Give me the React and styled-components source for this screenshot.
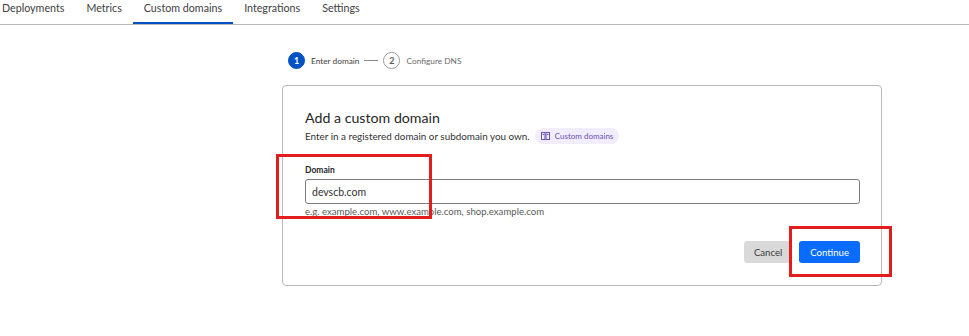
import React, { useState } from 'react';
import styled, { createGlobalStyle } from 'styled-components';

const GlobalStyle = createGlobalStyle`
  html, body {
    margin: 0;
    padding: 0;
    background: #ffffff;
    font-family: Lato, "Noto Sans", sans-serif;
    color: #313131;
  }
  * { box-sizing: border-box; }
`;

const TabBar = styled.nav`
  display: flex;
  height: 25px;
  border-bottom: 1px solid #b6b6b6;
  overflow: hidden;
`;

const TabList = styled.div`
  display: flex;
  margin-left: -9px;
`;

const Tab = styled.button`
  border: none;
  background: none;
  font-family: inherit;
  font-size: 10.7px;
  color: #404040;
  padding: 0 11px;
  height: 24px;
  line-height: 16px;
  padding-bottom: 7px;
  border-bottom: 2px solid ${p => (p.$active ? '#0051c3' : 'transparent')};
  cursor: pointer;
`;

const Main = styled.main`
  display: grid;
  grid-template-columns: 282px 600px;
`;

const Column = styled.div`
  grid-column: 2;
  display: flex;
  flex-direction: column;
`;

const Stepper = styled.div`
  display: flex;
  align-items: flex-start;
  padding: 27px 0 0 6px;
  height: 60px;
`;

const StepRow = styled.ol`
  display: flex;
  align-items: center;
  gap: 5px;
  list-style: none;
  margin: 0;
  padding: 0;
`;

const Step = styled.li`
  display: flex;
  align-items: center;
  gap: 6px;
  font-size: 8.3px;
  color: ${p => (p.$active ? '#404040' : '#6b6b6b')};
`;

const StepDot = styled.span`
  width: 17px;
  height: 17px;
  border-radius: 50%;
  display: inline-flex;
  align-items: center;
  justify-content: center;
  font-size: 9px;
  font-weight: 700;
  background: ${p => (p.$active ? '#0051c3' : '#ffffff')};
  color: ${p => (p.$active ? '#ffffff' : '#5a5a5a')};
  border: 1px solid ${p => (p.$active ? '#0051c3' : '#9a9a9a')};
`;

const StepLine = styled.span`
  width: 14px;
  height: 1px;
  background: #8a8a8a;
`;

const Card = styled.section`
  width: 600px;
  height: 201px;
  border: 1px solid #b8b8b8;
  border-radius: 4px;
  padding: 22px 22px 0 22px;
  display: flex;
  flex-direction: column;
`;

const Title = styled.h2`
  margin: 0;
  font-size: 14.2px;
  font-weight: 400;
  color: #262626;
  line-height: 20px;
`;

const SubRow = styled.div`
  display: flex;
  align-items: center;
  gap: 5px;
  margin-top: 0;
  font-size: 9.9px;
  color: #313131;
`;

const Pill = styled.span`
  display: inline-flex;
  align-items: center;
  gap: 5px;
  height: 16px;
  padding: 0 6px;
  border-radius: 8px;
  background: #f1edfc;
  color: #6a4fb9;
  font-size: 8px;
`;

const Field = styled.div`
  display: flex;
  flex-direction: column;
  margin-top: 20px;
`;

const Label = styled.label`
  font-size: 8.5px;
  font-weight: 700;
  color: #262626;
  line-height: 12px;
`;

const Input = styled.input`
  margin-top: 3px;
  width: 555px;
  height: 25px;
  border: 1px solid #7c7c7c;
  border-radius: 3px;
  padding: 0 6px;
  font-family: inherit;
  font-size: 10.5px;
  color: #313131;
  outline: none;
`;

const Hint = styled.span`
  margin-top: 2px;
  font-size: 9.6px;
  color: #5a5a5a;
`;

const Actions = styled.div`
  display: flex;
  justify-content: flex-end;
  gap: 7px;
  margin-top: 24px;
  width: 555px;
`;

const Button = styled.button`
  height: 22px;
  padding: 0 ${p => (p.$primary ? '11px' : '10px')};
  border: none;
  border-radius: 3px;
  font-family: inherit;
  font-size: 9.6px;
  background: ${p => (p.$primary ? '#0a6cff' : '#d9d9d9')};
  color: ${p => (p.$primary ? '#ffffff' : '#3a3a3a')};
  cursor: pointer;
`;

const Annotation = styled.div`
  position: absolute;
  border: 3px solid #e31c1c;
  pointer-events: none;
`;

const Page = styled.div`
  position: relative;
  width: 969px;
  height: 336px;
  overflow: hidden;
`;

const BookIcon = () => (
  <svg width="9" height="8" viewBox="0 0 9 8" fill="none" stroke="#6a4fb9" strokeWidth="1">
    <rect x="0.5" y="0.5" width="3.5" height="7" />
    <rect x="5" y="0.5" width="3.5" height="7" />
    <line x1="1.5" y1="2.5" x2="3" y2="2.5" />
    <line x1="6" y1="2.5" x2="7.5" y2="2.5" />
  </svg>
);

const tabs = ['Deployments', 'Metrics', 'Custom domains', 'Integrations', 'Settings'];

export default function App() {
  const [active, setActive] = useState('Custom domains');
  const [domain, setDomain] = useState('devscb.com');

  return (
    <Page>
      <GlobalStyle />
      <TabBar>
        <TabList>
          {tabs.map(t => (
            <Tab key={t} $active={t === active} onClick={() => setActive(t)}>
              {t}
            </Tab>
          ))}
        </TabList>
      </TabBar>
      <Main>
        <Column>
          <Stepper>
            <StepRow>
              <Step $active>
                <StepDot $active>1</StepDot>
                Enter domain
              </Step>
              <StepLine />
              <Step>
                <StepDot>2</StepDot>
                Configure DNS
              </Step>
            </StepRow>
          </Stepper>
          <Card>
            <Title>Add a custom domain</Title>
            <SubRow>
              Enter in a registered domain or subdomain you own.
              <Pill>
                <BookIcon />
                Custom domains
              </Pill>
            </SubRow>
            <Field>
              <Label htmlFor="domain">Domain</Label>
              <Input id="domain" value={domain} onChange={e => setDomain(e.target.value)} />
              <Hint>e.g. example.com, www.example.com, shop.example.com</Hint>
            </Field>
            <Actions>
              <Button>Cancel</Button>
              <Button $primary>Continue</Button>
            </Actions>
          </Card>
        </Column>
      </Main>
      <Annotation style={{ left: 276, top: 154, width: 156, height: 65 }} />
      <Annotation style={{ left: 789, top: 226, width: 103, height: 51 }} />
    </Page>
  );
}
